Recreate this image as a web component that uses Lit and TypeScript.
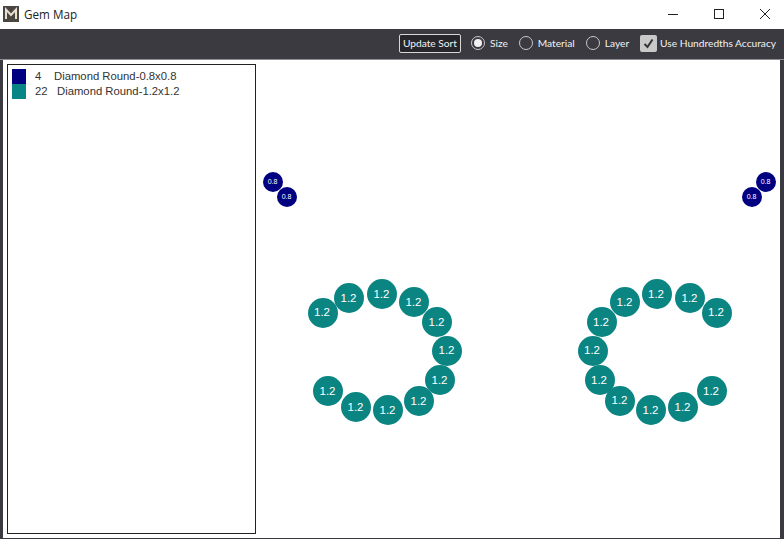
import { LitElement, html, css } from "lit";
import { customElement } from "lit/decorators.js";

type Gem = [x: number, y: number];

const SMALL: Gem[] = [
  [273, 182],
  [287, 196.5],
  [752, 196.5],
  [766, 182],
];

const LARGE: Gem[] = [
  [322.5, 312.5],
  [349, 298],
  [382, 294],
  [414, 302],
  [437, 322],
  [447, 350.5],
  [440, 380],
  [419, 401],
  [388, 410],
  [356, 407],
  [328, 391],
  [716.5, 312.5],
  [690, 298],
  [656.5, 294],
  [625, 302],
  [601.5, 322],
  [592.5, 350.5],
  [599.5, 380],
  [620, 400.5],
  [651, 410],
  [683, 407],
  [711.5, 391],
];

// canvas starts at x=3, y=60 in page coords
const gem = ([x, y]: Gem, cls: string, label: string) =>
  html`<div class="gem ${cls}" style="left:${x - 3}px;top:${y - 60}px">${label}</div>`;

@customElement("app-root")
export class AppRoot extends LitElement {
  static styles = css`
    :host {
      display: flex;
      flex-direction: column;
      width: 784px;
      height: 539px;
      overflow: hidden;
      background: #3a3a40;
      font-family: "Open Sans", "Noto Sans", sans-serif;
    }

    .titlebar {
      height: 29px;
      flex: none;
      background: #fff;
      display: flex;
      align-items: center;
      padding-left: 3px;
      color: #222;
      font-size: 11.7px;
    }

    .logo {
      display: block;
      margin: 0 5px 2px 0;
    }

    .title {
      flex: 1;
      padding-bottom: 2px;
    }

    .winbtns {
      display: flex;
      margin: 0 -4px 2px 0;
    }

    .winbtn {
      width: 46px;
      height: 27px;
      display: flex;
      align-items: center;
      justify-content: center;
    }

    .toolbar {
      height: 31px;
      flex: none;
      display: flex;
      align-items: center;
      justify-content: flex-end;
      padding: 0 8px 2px 0;
      color: #f2f2f2;
      font-family: Lato, "Open Sans", sans-serif;
      font-size: 10.2px;
      border-bottom: 1px solid #8e8e92;
      box-sizing: border-box;
    }

    .update {
      box-sizing: border-box;
      height: 19px;
      width: 62px;
      border: 1px solid #d8d8d8;
      border-radius: 2px;
      background: #26262b;
      color: #f2f2f2;
      font: inherit;
      padding: 0;
      margin-right: 10px;
      white-space: nowrap;
    }

    .radio {
      display: flex;
      align-items: center;
      gap: 5px;
      margin-right: 11px;
    }

    .ring {
      box-sizing: border-box;
      width: 14px;
      height: 14px;
      border-radius: 50%;
      border: 1px solid #c8c8c8;
      display: flex;
      align-items: center;
      justify-content: center;
    }

    .dot {
      width: 8px;
      height: 8px;
      border-radius: 50%;
      background: #f2f2f2;
    }

    .check {
      display: flex;
      align-items: center;
      gap: 3px;
    }

    .box {
      width: 17px;
      height: 17px;
      border-radius: 2px;
      background: #c9c9c9;
      display: flex;
      align-items: center;
      justify-content: center;
    }

    .main {
      flex: 1;
      margin: 0 4px 4px 3px;
      background: #fff;
      position: relative;
      display: flex;
      padding: 4px;
      box-sizing: border-box;
    }

    .list {
      box-sizing: border-box;
      width: 249px;
      height: 470px;
      border: 1px solid #222;
      padding: 4px 4px;
      font-family: "Liberation Sans", Arial, sans-serif;
      font-size: 11.3px;
      line-height: 14px;
      color: #333;
    }

    .row {
      display: flex;
      align-items: flex-start;
      height: 15px;
    }

    .swatch {
      width: 14px;
      height: 15px;
      flex: none;
      margin-right: 9px;
    }

    .navy {
      background: #000080;
    }

    .teal {
      background: #0a8585;
    }

    .count-4 {
      width: 19px;
    }

    .count-22 {
      width: 22px;
    }

    .gem {
      position: absolute;
      transform: translate(-50%, -50%);
      box-sizing: border-box;
      border-radius: 50%;
      display: flex;
      align-items: center;
      justify-content: center;
      color: #fff;
      font-family: "Liberation Sans", Arial, sans-serif;
    }

    .gem.large {
      width: 30px;
      height: 30px;
      padding: 0 1px 1px 0;
      background: #0b8582;
      font-size: 11.5px;
    }

    .gem.small {
      width: 20px;
      height: 20px;
      padding: 0 1px 1px 0;
      background: #000080;
      font-size: 7px;
    }
  `;

  render() {
    return html`
      <div class="titlebar">
        <svg class="logo" width="16" height="16" viewBox="0 0 16 16">
          <rect width="16" height="16" fill="#4a4540" />
          <path d="M3 13V3.500L8 9l5-5.500V13" fill="none" stroke="#e8dfd0" stroke-width="2" />
        </svg>
        <span class="title">Gem Map</span>
        <div class="winbtns">
          <div class="winbtn">
            <svg width="12" height="12" viewBox="0 0 12 12"><path d="M1 6.500h10" stroke="#222" /></svg>
          </div>
          <div class="winbtn">
            <svg width="12" height="12" viewBox="0 0 12 12"><rect x="1.500" y="1.500" width="9" height="9" fill="none" stroke="#222" /></svg>
          </div>
          <div class="winbtn">
            <svg width="12" height="12" viewBox="0 0 12 12"><path d="M1 1l10 10M11 1L1 11" stroke="#222" /></svg>
          </div>
        </div>
      </div>
      <div class="toolbar">
        <button class="update">Update Sort</button>
        <div class="radio"><span class="ring"><span class="dot"></span></span>Size</div>
        <div class="radio"><span class="ring"></span>Material</div>
        <div class="radio"><span class="ring"></span>Layer</div>
        <div class="check">
          <span class="box">
            <svg width="13" height="13" viewBox="0 0 13 13"><path d="M2.500 7l3 3 5-7.500" fill="none" stroke="#333" stroke-width="2" /></svg>
          </span>
          Use Hundredths Accuracy
        </div>
      </div>
      <div class="main">
        <div class="list">
          <div class="row">
            <span class="swatch navy"></span><span class="count-4">4</span>Diamond Round-0.8x0.8
          </div>
          <div class="row">
            <span class="swatch teal"></span><span class="count-22">22</span>Diamond Round-1.2x1.2
          </div>
        </div>
        ${SMALL.map((g) => gem(g, "small", "0.8"))}
        ${LARGE.map((g) => gem(g, "large", "1.2"))}
      </div>
    `;
  }
}
